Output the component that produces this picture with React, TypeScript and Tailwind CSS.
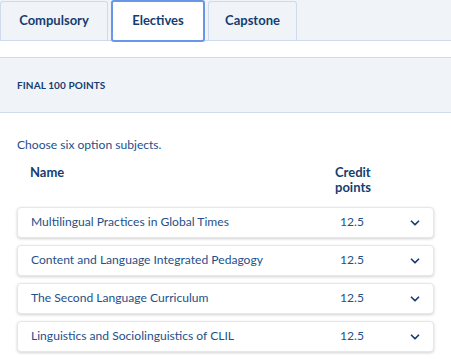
import { ChevronDown } from 'lucide-react'

const subjects = [
  'Multilingual Practices in Global Times',
  'Content and Language Integrated Pedagogy',
  'The Second Language Curriculum',
  'Linguistics and Sociolinguistics of CLIL',
]

const tabs = [
  { label: 'Compulsory', w: 'w-[108px]' },
  { label: 'Electives', w: 'w-[94px]' },
  { label: 'Capstone', w: 'w-[89px]' },
]

export default function App() {
  return (
    <div className="w-[451px] h-[359px] overflow-hidden bg-white text-[#1e4b8a]" style={{ fontFamily: 'Lato, "Liberation Sans", sans-serif' }}>
      {/* Tabs */}
      <div className="h-[41px] bg-[#f0f4f9] border-b border-[#cfdbea] flex items-start gap-[3px] pt-px">
        {tabs.map((t) => {
          const active = t.label === 'Electives'
          return (
            <div
              key={t.label}
              className={
                active
                  ? `${t.w} h-[42px] -mt-px bg-white border-2 border-[#6797e6] rounded-[3px] flex items-center justify-center text-[13px] font-bold text-[#163d70] relative z-10`
                  : `${t.w} h-[39px] bg-[#f0f4f9] border border-[#cfdbea] rounded-t-[3px] border-b-0 flex items-center justify-center text-[13px] font-bold text-[#163d70]`
              }
            >
              {t.label}
            </div>
          )
        })}
      </div>

      {/* Section header */}
      <div className="mt-[16px] h-[56px] bg-[#f0f4f9] border-y border-[#cfdbea] flex items-center px-[17px]">
        <span className="text-[10px] font-bold tracking-[0.01em] text-[#163d70]">FINAL 100 POINTS</span>
      </div>

      <p className="mt-[22px] px-[17px] text-[12.1px] leading-[20px] text-[#244f8a]">Choose six option subjects.</p>

      {/* Table header */}
      <div className="mt-[10px] flex px-[30px] text-[13px] font-bold text-[#163d70] leading-[15px]">
        <div className="flex-1">Name</div>
        <div className="w-[86px]">
          Credit
          <br />
          points
        </div>
      </div>

      {/* Rows */}
      <div className="mt-[12px] px-[17px] flex flex-col gap-[7px]">
        {subjects.map((s) => (
          <div
            key={s}
            className="h-[31px] bg-white rounded-[4px] border border-[#e4e8ee] shadow-[0_1px_3px_rgba(0,0,0,0.18)] flex items-center pl-[13px] pr-[11px] text-[12.1px] text-[#244f8a]"
          >
            <div className="flex-1">{s}</div>
            <div className="w-[68px]">12.5</div>
            <ChevronDown size={14} strokeWidth={3} className="text-[#163d70]" />
          </div>
        ))}
      </div>
    </div>
  )
}
